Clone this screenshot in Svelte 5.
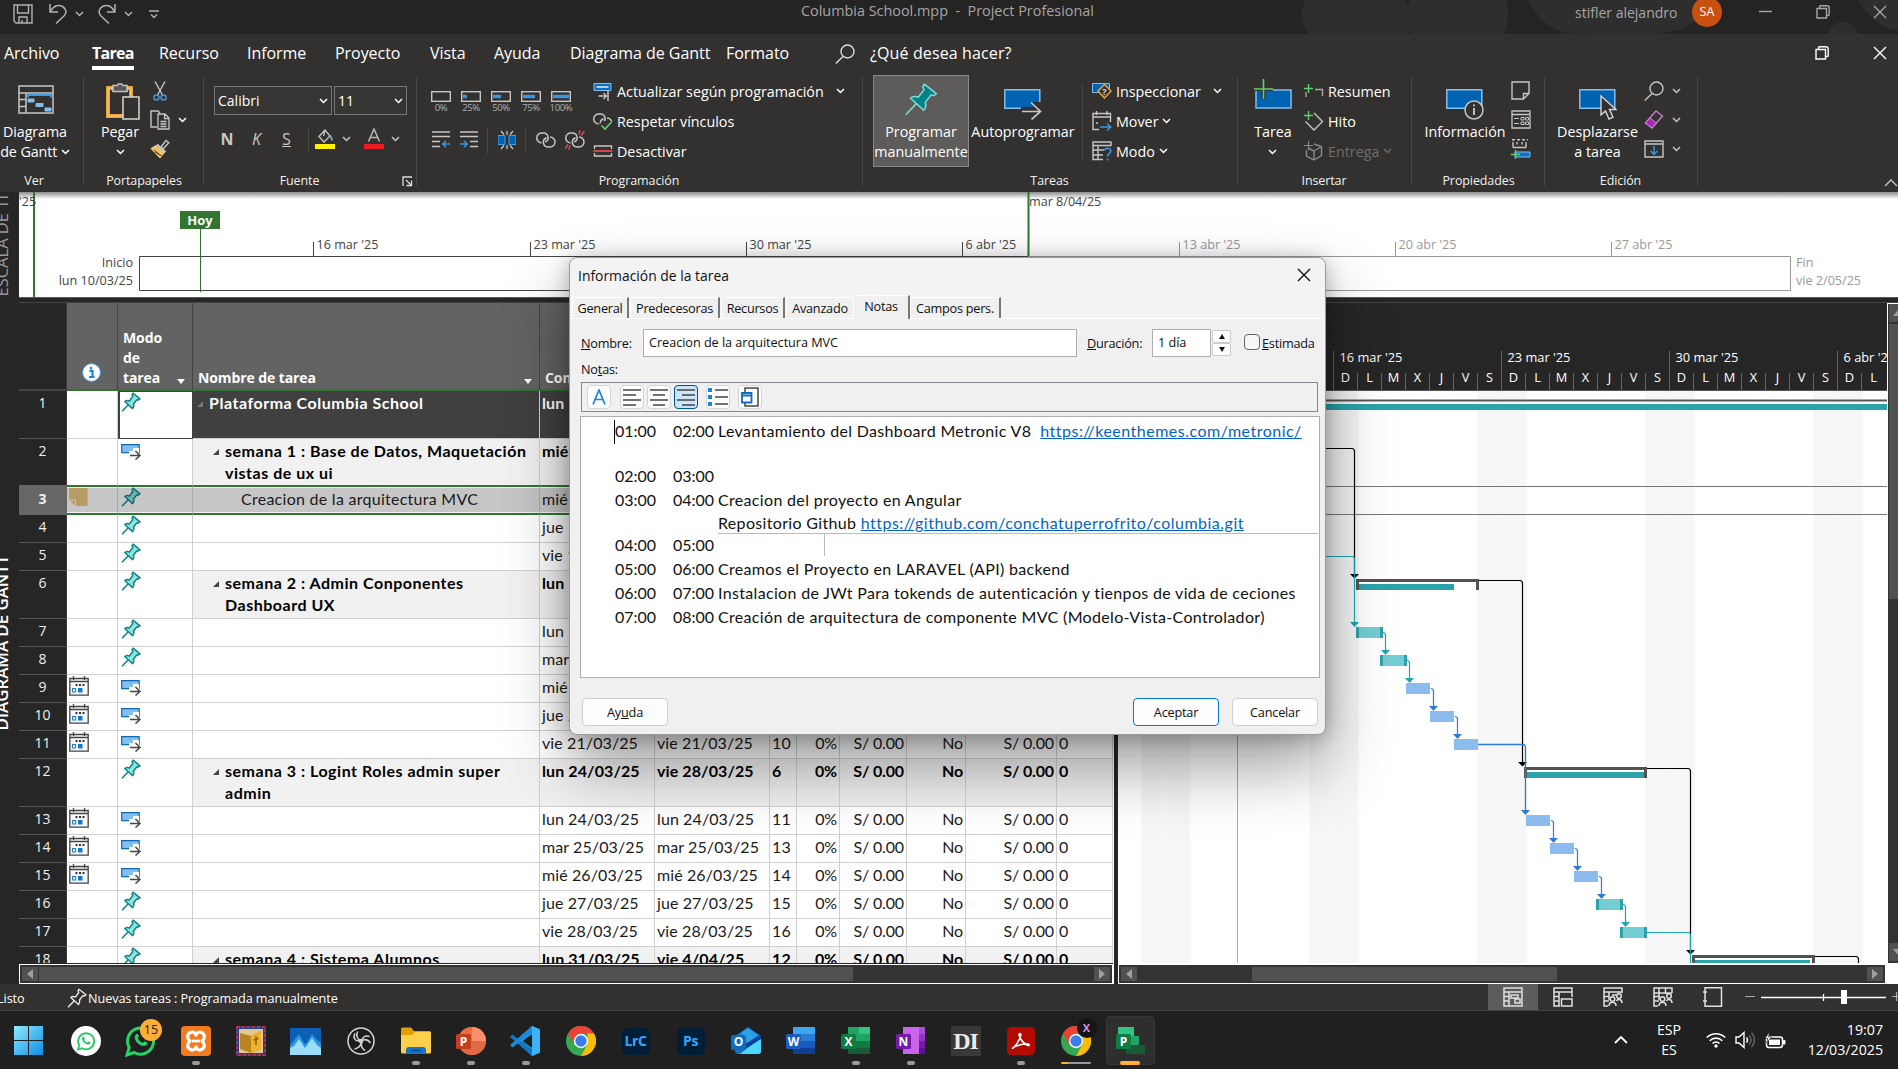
<script>
  const tabs = ['Archivo', 'Tarea', 'Recurso', 'Informe', 'Proyecto', 'Vista', 'Ayuda', 'Diagrama de Gantt', 'Formato'];
  const percents = [0, 25, 50, 75, 100];

  const ticks = [
    { x: 313.5, t: "16 mar '25" },
    { x: 530.5, t: "23 mar '25" },
    { x: 746.5, t: "30 mar '25" },
    { x: 962.5, t: "6 abr '25" },
    { x: 1179.5, t: "13 abr '25", off: true },
    { x: 1395.5, t: "20 abr '25", off: true },
    { x: 1611.5, t: "27 abr '25", off: true }
  ];

  const rows = [
    { n: 1, mode: 'pin', name: 'Plataforma Columbia School', lvl: 1, tall: true, s: 'lun 10/03/25', e: 'vie 2/05/25', p: '' },
    { n: 2, mode: 'auto', name: 'semana 1 : Base de Datos, Maquetación vistas de ux ui', lvl: 2, tall: true, s: 'mié 12/03/25', e: 'vie 14/03/25', p: '' },
    { n: 3, mode: 'pin', name: 'Creacion de la arquitectura MVC', lvl: 3, note: true, sel: true, s: 'mié 12/03/25', e: 'mié 12/03/25', p: '' },
    { n: 4, mode: 'pin', s: 'jue 13/03/25', e: 'jue 13/03/25', p: '3' },
    { n: 5, mode: 'pin', s: 'vie 14/03/25', e: 'vie 14/03/25', p: '4' },
    { n: 6, mode: 'pin', name: 'semana 2 : Admin Conponentes Dashboard UX', lvl: 2, tall: true, s: 'lun 17/03/25', e: 'vie 21/03/25', p: '2' },
    { n: 7, mode: 'pin', s: 'lun 17/03/25', e: 'lun 17/03/25', p: '5' },
    { n: 8, mode: 'pin', s: 'mar 18/03/25', e: 'mar 18/03/25', p: '7' },
    { n: 9, mode: 'auto', cal: true, s: 'mié 19/03/25', e: 'mié 19/03/25', p: '8' },
    { n: 10, mode: 'auto', cal: true, s: 'jue 20/03/25', e: 'jue 20/03/25', p: '9' },
    { n: 11, mode: 'auto', cal: true, s: 'vie 21/03/25', e: 'vie 21/03/25', p: '10' },
    { n: 12, mode: 'pin', name: 'semana 3 : Logint Roles admin super admin', lvl: 2, tall: true, s: 'lun 24/03/25', e: 'vie 28/03/25', p: '6' },
    { n: 13, mode: 'auto', cal: true, s: 'lun 24/03/25', e: 'lun 24/03/25', p: '11' },
    { n: 14, mode: 'auto', cal: true, s: 'mar 25/03/25', e: 'mar 25/03/25', p: '13' },
    { n: 15, mode: 'auto', cal: true, s: 'mié 26/03/25', e: 'mié 26/03/25', p: '14' },
    { n: 16, mode: 'pin', s: 'jue 27/03/25', e: 'jue 27/03/25', p: '15' },
    { n: 17, mode: 'pin', s: 'vie 28/03/25', e: 'vie 28/03/25', p: '16' },
    { n: 18, mode: 'pin', name: 'semana 4 : Sistema Alumnos', lvl: 2, tall: true, s: 'lun 31/03/25', e: 'vie 4/04/25', p: '12' }
  ];

  const weeks = [
    { x: 1165.5, t: "9 mar '25" },
    { x: 1333.5, t: "16 mar '25" },
    { x: 1501.5, t: "23 mar '25" },
    { x: 1669.5, t: "30 mar '25" },
    { x: 1837.5, t: "6 abr '25" }
  ];
  const dayNames = ['D', 'L', 'M', 'X', 'J', 'V', 'S'];
  const days = Array.from({ length: 30 }, (_, i) => ({ x: 1165.5 + i * 24, t: dayNames[i % 7] }));

  const bars = [
    { x: 1356, y: 627, teal: true, ax: 1385.5 },
    { x: 1380, y: 655, teal: true, ax: 1409.5 },
    { x: 1406, y: 683, ax: 1433.5 },
    { x: 1430, y: 711, ax: 1457.5 },
    { x: 1454, y: 739 },
    { x: 1526, y: 815, ax: 1553.5 },
    { x: 1550, y: 843, ax: 1577.5 },
    { x: 1574, y: 871, ax: 1601.5 },
    { x: 1596, y: 899, teal: true, ax: 1625.5 },
    { x: 1620, y: 927, teal: true }
  ];
  const summaries = [
    { x: 1356, y: 579, done: 95 },
    { x: 1524, y: 767, done: 120 },
    { x: 1692, y: 955, done: 118 }
  ];

  const notes = [
    { a: '01:00', b: '02:00', t: 'Levantamiento del Dashboard Metronic V8', link: 'https://keenthemes.com/metronic/', cls: 'two' },
    { a: '02:00', b: '03:00', t: '' },
    { a: '03:00', b: '04:00', t: 'Creacion del proyecto en Angular', t2: 'Repositorio Github', link2: 'https://github.com/conchatuperrofrito/columbia.git', cls: 'two' },
    { a: '04:00', b: '05:00', t: '' },
    { a: '05:00', b: '06:00', t: 'Creamos el Proyecto en LARAVEL (API) backend' },
    { a: '06:00', b: '07:00', t: 'Instalacion de JWt Para tokends de autenticación y tienpos de vida de ceciones' },
    { a: '07:00', b: '08:00', t: 'Creación de arquitectura de componente MVC (Modelo-Vista-Controlador)' }
  ];

  const apps = [
    { i: 'win' }, { i: 'waWhite' }, { i: 'wa', badge: '15' }, { i: 'xampp', run: true }, { i: 'bible' }, { i: 'mount' },
    { i: 'obs' }, { i: 'folder', run: true }, { i: 'ppt', run: true }, { i: 'code', run: true }, { i: 'chrome' },
    { i: 'lrc' }, { i: 'ps' }, { i: 'outlook' }, { i: 'word' }, { i: 'excel', run: true }, { i: 'onenote', run: true },
    { i: 'di' }, { i: 'acrobat', run: true }, { i: 'chromeX', multi: true }, { i: 'project', active: true }
  ];
</script>

{#snippet chev(cls = '')}
  <svg class="chev {cls}" width="9" height="6" viewBox="0 0 9 6"><path d="M1 1l3.5 3.5L8 1" fill="none" stroke="currentColor" stroke-width="1.5" /></svg>
{/snippet}

{#snippet office(letter, kind)}
  <svg class="app" width="30" height="30" viewBox="0 0 30 30">
    {#if kind === 'word'}
      <path d="M7 1h22v7H7z" fill="#41a5ee" /><path d="M7 8h22v7H7z" fill="#2b7cd3" /><path d="M7 15h22v7H7z" fill="#185abd" /><path d="M7 22h22v6H7z" fill="#103f91" />
      <rect x="0" y="8" width="15" height="15" rx="1.5" fill="#1b5cbe" />
    {:else if kind === 'excel'}
      <path d="M7 1h11v7H7zM7 8h11v7H7z" fill="#21a366" /><path d="M18 1h11v7H18z" fill="#33c481" /><path d="M18 8h11v7H18z" fill="#21a366" /><path d="M7 15h22v7H7z" fill="#107c41" /><path d="M7 22h22v6H7z" fill="#185c37" />
      <rect x="0" y="8" width="15" height="15" rx="1.5" fill="#107c41" />
    {:else if kind === 'onenote'}
      <path d="M7 1h16v27H7z" fill="#ca64ea" /><path d="M23 1h6v7h-6z" fill="#ae4bd5" /><path d="M23 8h6v7h-6z" fill="#9332bf" /><path d="M23 15h6v7h-6z" fill="#7719aa" /><path d="M23 22h6v6h-6z" fill="#5c1399" />
      <rect x="0" y="8" width="15" height="15" rx="1.5" fill="#7719aa" />
    {:else if kind === 'ppt'}
      <circle cx="16" cy="15" r="14" fill="#d35230" /><path d="M16 1a14 14 0 0 1 14 14H16z" fill="#ff8f6b" /><path d="M2 15h28a14 14 0 0 1-28 0z" fill="#e06a47" /><path d="M16 1v14H2A14 14 0 0 1 16 1z" fill="#ed6c47" />
      <rect x="0" y="8" width="15" height="15" rx="1.5" fill="#c43e1c" />
    {:else if kind === 'outlook'}
      <path d="M4 10L17 1l13 9v15a3 3 0 0 1-3 3H7a3 3 0 0 1-3-3z" fill="#1172c8" /><path d="M10 7l7-5 10 7-12 9z" fill="#2ea0e8" /><path d="M30 11v14a3 3 0 0 1-3 3H9z" fill="#4fd8ff" /><path d="M14 18l16-9v4L16 22z" fill="#0a3f9a" />
      <rect x="0" y="9" width="15" height="15" rx="1.5" fill="#0f6cbd" />
    {:else}
      <path d="M2 1h16v9H2z" fill="#33c481" /><path d="M8 10h15v9H8z" fill="#21a366" /><path d="M10 19h19v9H10z" fill="#185c37" />
      <rect x="0" y="8" width="15" height="15" rx="1.5" fill="#107c41" />
    {/if}
    <text x="7.5" y="20" text-anchor="middle" class="officeletter">{letter}</text>
  </svg>
{/snippet}

{#snippet chromeIcon()}
  <svg class="app" width="30" height="30" viewBox="0 0 30 30">
    <circle cx="15" cy="15" r="15" fill="#34a853" />
    <path d="M2 7.5A15 15 0 0 1 28 7.5H15L8.5 18.5z" fill="#ea4335" />
    <path d="M28 7.5A15 15 0 0 1 15 30l6.5-11.5L21.5 7.5z" fill="#fbbc05" />
    <circle cx="15" cy="15" r="7.2" fill="#fff" /><circle cx="15" cy="15" r="5.7" fill="#3b7ded" />
  </svg>
{/snippet}

{#snippet appIcon(n)}
  {#if n === 'win'}
    <svg class="app" width="30" height="30" viewBox="0 0 30 30"><defs><linearGradient id="wg" x1="0" y1="0" x2="1" y2="1"><stop offset="0" stop-color="#8feaff" /><stop offset="1" stop-color="#0c8ee4" /></linearGradient></defs><path d="M0 0h14v14H0zM15 0h14v14H15zM0 15h14v14H0zM15 15h14v14H15z" fill="url(#wg)" /></svg>
  {:else if n === 'waWhite'}
    <svg class="app" width="30" height="30" viewBox="0 0 30 30"><circle cx="15" cy="15" r="15" fill="#fff" /><path d="M7 23.5l1.2-4.3a8 8 0 1 1 3 3z" fill="none" stroke="#25c560" stroke-width="1.8" /><path d="M11.5 11.5c1-1.5 1.7-1 2.2.7.3.8-.8 1-.5 1.7.8 1.5 1.7 2.2 2.9 2.7.7.2 1-1.2 1.7-1 1.5.7 1.800.8 1.5 1.5-.8 2-3.5 1.7-5.5.2-2-1.5-3.5-3.800-2.300-5.800z" fill="#25c560" /></svg>
  {:else if n === 'wa'}
    <svg class="app" width="32" height="32" viewBox="0 0 32 32"><path d="M2 30l2.2-7.5a13 13 0 1 1 5 5z" fill="none" stroke="#25d366" stroke-width="3" /><path d="M10.5 10c1.2-2 2.5-1.5 3.3 1 .3 1-1.2 1.5-.8 2.4 1.2 2.3 2.6 3.5 4.5 4.3 1 .3 1.5-1.7 2.6-1.3 2.3 1 2.8 1.2 2.3 2.3-1.2 3-5.5 2.8-8.500.5-3.200-2.400-5.300-6.200-3.400-9.200z" fill="#25d366" /></svg>
  {:else if n === 'xampp'}
    <svg class="app" width="30" height="30" viewBox="0 0 30 30"><rect width="30" height="30" rx="4" fill="#f47a20" /><path d="M9.500 6.500c3.500-1.500 4.500.5 5.500 2.500 1-2 2-4 5.500-2.500 4 1.700 3.500 6 .5 8.500 3 2.500 3.500 6.800-.5 8.500-3.500 1.500-4.500-.5-5.500-2.500-1 2-2 4-5.500 2.500-4-1.700-3.500-6-.5-8.500-3-2.500-3.500-6.800.5-8.500z" fill="none" stroke="#fff" stroke-width="3.200" stroke-linejoin="round" /><path d="M11 15h8" stroke="#fff" stroke-width="2.800" /></svg>
  {:else if n === 'bible'}
    <svg class="app" width="30" height="30" viewBox="0 0 30 30"><rect width="30" height="30" fill="#22408c" /><rect x="1" y="1" width="28" height="28" fill="none" stroke="#c22b3a" stroke-width="2" stroke-dasharray="3 2" /><rect x="3" y="3" width="24" height="24" fill="#e0c890" /><path d="M4 7l11 3 10-5v18l-10 4-11-4z" fill="#b98420" /><path d="M15 10l10-5v18l-10 4z" fill="#edb32e" /><path d="M20 10v9M17.5 14l5-1.5" stroke="#8c5a10" stroke-width="1.4" /></svg>
  {:else if n === 'mount'}
    <svg class="app" width="31" height="27" viewBox="0 0 31 27"><rect width="31" height="27" rx="1" fill="#0c5fb4" /><path d="M0 18l5-7 4-5 5 9 2 1 6-10 4 5 5 4v12H0z" fill="#2b95de" /><path d="M0 20l4-2 5-7 6 9 7-10 5 7 4 3v7H0z" fill="#9adcfa" /></svg>
  {:else if n === 'obs'}
    <svg class="app" width="28" height="28" viewBox="0 0 28 28"><circle cx="14" cy="14" r="13" fill="#1c1b1e" stroke="#d5d5d5" stroke-width="1.500" /><path d="M14 14c-4-2-5-5.500-3.500-9.500M14 14c4-2.500 7-1.500 9.500 2M14 14c.3 4.500-2 7-6.500 8M8 6.500c-2.500 4 0 8 4 7.500M22.500 9.500c-4-1.500-7.500.5-7.500 4.500M18 23.500c-3.500-2-4.500-5-3-9" fill="none" stroke="#cfcfcf" stroke-width="1.500" /><circle cx="14" cy="14" r="2.300" fill="#cfcfcf" /></svg>
  {:else if n === 'folder'}
    <svg class="app" width="30" height="28" viewBox="0 0 30 28"><path d="M0 2a1.500 1.500 0 0 1 1.500-1.500H10L13 4h15.500A1.500 1.500 0 0 1 30 5.500V12H0z" fill="#e0a100" /><path d="M0 8h11l3-3h14.500A1.500 1.500 0 0 1 30 6.500V25a1.500 1.500 0 0 1-1.500 1.500h-27A1.500 1.500 0 0 1 0 25z" fill="#fcd04a" /><path d="M5 27v-4a3 3 0 0 1 3-3h14a3 3 0 0 1 3 3v4z" fill="#1673c8" /><path d="M10 23.500h10" stroke="#0a4a8c" stroke-width="1.500" /></svg>
  {:else if n === 'code'}
    <svg class="app" width="31" height="30" viewBox="0 0 31 30"><path d="M22 0l8 3.500v23L22 30 6 15z" fill="#2aa2ea" /><path d="M22 8v14l-9.500-7z" fill="#202020" /><path d="M2.500 8.500L22 23v7L0 11z" fill="#1177c2" /><path d="M2.500 21.500L22 7V0L0 19z" fill="#1b8ad8" /><path d="M22 0l8 3.500v23L22 30z" fill="#3bb3f5" /></svg>
  {:else if n === 'chrome'}
    {@render chromeIcon()}
  {:else if n === 'chromeX'}
    <span class="stack">{@render chromeIcon()}<span class="xbadge">X</span></span>
  {:else if n === 'lrc'}
    <span class="adobe">LrC</span>
  {:else if n === 'ps'}
    <span class="adobe">Ps</span>
  {:else if n === 'outlook'}
    {@render office('O', 'outlook')}
  {:else if n === 'word'}
    {@render office('W', 'word')}
  {:else if n === 'excel'}
    {@render office('X', 'excel')}
  {:else if n === 'onenote'}
    {@render office('N', 'onenote')}
  {:else if n === 'ppt'}
    {@render office('P', 'ppt')}
  {:else if n === 'project'}
    {@render office('P', 'project')}
  {:else if n === 'di'}
    <span class="di">DI</span>
  {:else if n === 'acrobat'}
    <svg class="app" width="28" height="28" viewBox="0 0 28 28"><rect width="28" height="28" rx="4.500" fill="#b30b00" /><path d="M6 21c2.500-2 7-8 7.800-13 .2-2-2-2-1.700 0 .8 4.500 5 9 8.900 10.500 2 .5 1.500-2-1-1.800-4 .2-9 1.500-12.500 3.200-2 1.200-2.500 1.800-1.500 1.100z" fill="none" stroke="#fff" stroke-width="1.600" stroke-linejoin="round" /></svg>
  {/if}
{/snippet}

{#snippet pin(w = 20, fill = '#8ee5e0', stroke = '#128289', sw = 1.5)}
  <svg width={w} height={w} viewBox="0 0 20 20"><path d="M1 19.300l6-6.300M12 1.200l7 5.600-1.500 1.200-1.600-.3-3.400 4.300c.6 1.700.2 3.300-.9 4.600L3.800 9.500c1.300-1.100 3-1.300 4.600-.5L11.800 4.500 11 2.800z" fill={fill} stroke={stroke} stroke-width={sw} stroke-linejoin="round" /></svg>
{/snippet}

{#snippet restore()}
  <svg width="14" height="14" viewBox="0 0 14 14"><path d="M1 3.500h9.500v9.500H1zM3.500 3V1.700C3.500 1 4 .8 4.500.8H11c1.500 0 2.200.8 2.200 2.200v6.500c0 .7-.4 1-1 1H11" fill="none" stroke="currentColor" stroke-width="1.400" /></svg>
{/snippet}
{#snippet cross()}
  <svg width="14" height="14" viewBox="0 0 14 14"><path d="M1 1l12 12M13 1L1 13" fill="none" stroke="currentColor" stroke-width="1.400" /></svg>
{/snippet}

{#snippet icon(n)}
  {#if n === 'gantt'}
    <svg width="36" height="29" viewBox="0 0 36 29"><path d="M1 1h34v27H1zM1 8h34M8 8v20M1 14.500h7M1 21.500h7" fill="none" stroke="#c8c6c4" stroke-width="1.500" /><path d="M10 12.500v-2.500h23v2.500" fill="none" stroke="#3a9ae8" stroke-width="2" /><path d="M10 14h6v3h-6zM18 18.500h7v3h-7zM27 23h6v3h-6z" fill="#83beec" stroke="#83beec" /></svg>
  {:else if n === 'paste'}
    <svg width="34" height="39" viewBox="0 0 34 39"><path d="M2 7h23v28H2z" fill="none" stroke="#e8a33d" stroke-width="4" /><path d="M2 7h23v28H2z" fill="none" stroke="#f3d38b" stroke-width="1" /><path d="M7 4.500h4a3.500 3.500 0 0 1 6 0h4v6H7z" fill="#555" stroke="#c8c6c4" stroke-width="1.500" /><path d="M17 16h16v22H17z" fill="#32312f" stroke="#d8d6d4" stroke-width="1.500" /></svg>
  {:else if n === 'cut'}
    <svg width="14" height="20" viewBox="0 0 14 20"><path d="M2 .5L9.500 14M12 .5L4.500 14" stroke="#c8c6c4" stroke-width="1.400" fill="none" /><circle cx="3.500" cy="16.500" r="2.500" fill="none" stroke="#3a96dd" stroke-width="1.600" /><circle cx="10.500" cy="16.500" r="2.500" fill="none" stroke="#3a96dd" stroke-width="1.600" /></svg>
  {:else if n === 'copy'}
    <svg width="20" height="20" viewBox="0 0 20 20"><path d="M7 17H1V1h7l2 2" fill="none" stroke="#c8c6c4" stroke-width="1.400" /><path d="M8 4h7l4 4v11H8zM14.500 4v4.500H19M10.500 11.500h6M10.500 14h6M10.500 16.500h6" fill="none" stroke="#c8c6c4" stroke-width="1.300" /></svg>
  {:else if n === 'brush'}
    <svg width="20" height="20" viewBox="0 0 20 20"><path d="M11 8l5-6.500 2.800 2.300L13 10z" fill="none" stroke="#c8c6c4" stroke-width="1.400" /><path d="M1 9.500l5-3 8.500 7L10 19z" fill="#f0c06a" stroke="#f3d38b" /><path d="M5 13l7 4M4 11l6 5" stroke="#5a3d10" stroke-width="1" /><path d="M7 5.500l8.500 7.500" stroke="#c8c6c4" stroke-width="2" /></svg>
  {:else if n === 'fill'}
    <svg width="20" height="22" viewBox="0 0 20 22"><path d="M4 8.500L10 2l5 6-6 6zM10 2L8.500 8" fill="none" stroke="#c8c6c4" stroke-width="1.300" /><path d="M15 7c2 1 3 3.500 2.500 6-1 0-1.500-1-2-3z" fill="#6db3e8" /><path d="M0 16h20v5H0z" fill="#fff200" /></svg>
  {:else if n === 'fontcolor'}
    <svg width="20" height="22" viewBox="0 0 20 22"><path d="M4.500 13.500L10 1l5.500 12.500M6.500 9.500h7" fill="none" stroke="#b8b6b4" stroke-width="1.500" /><path d="M0 16h20v5H0z" fill="#ed1c24" /></svg>
  {:else if n === 'outdent' || n === 'indent'}
    <svg width="18" height="18" viewBox="0 0 18 18"><path d="M0 1h18M0 5.500h18" stroke="#c8c6c4" stroke-width="1.400" />{#if n === 'outdent'}<path d="M0 10.500h8M0 15.500h8" stroke="#c8c6c4" stroke-width="1.400" /><path d="M18 13h-7M14 9.800L10.800 13l3.200 3.200" fill="none" stroke="#3a96dd" stroke-width="1.500" />{:else}<path d="M10 10.500h8M10 15.500h8" stroke="#c8c6c4" stroke-width="1.400" /><path d="M0 13h7M4 9.800L7.200 13 4 16.200" fill="none" stroke="#3a96dd" stroke-width="1.500" />{/if}</svg>
  {:else if n === 'split'}
    <svg width="18" height="20" viewBox="0 0 18 20"><path d="M0 5.500h7v9H0zM11 5.500h7v9h-7z" fill="#0063b1" stroke="#4aa0e0" /><path d="M9 1v4M9 15v4M3 1l3 3.500M15 1l-3 3.500M3 19l3-3.500M15 19l-3-3.500" stroke="#c8c6c4" stroke-width="1.300" /></svg>
  {:else if n === 'link' || n === 'unlink' || n === 'respect'}
    <svg width="20" height="20" viewBox="0 0 20 20"><path d="M5.500 13A5 5 0 0 1 6 3h1.500a4.700 4.700 0 0 1 1.800 9M14 7a5 5 0 0 1 0 10h-2a4.800 4.800 0 0 1-1.500-9.300" fill="none" stroke="#c8c6c4" stroke-width="1.500" />{#if n === 'unlink'}<path d="M14 4.500l1-4.500M16 5.500L19.500 1M5 15.500L4 20M3 14.500L0 19" stroke="#e8494f" stroke-width="1.400" />{/if}{#if n === 'respect'}<path d="M7 13l2-3 11 0v10H7z" fill="#32312f" /><path d="M8.500 14.500l3.500 3.500 7-7.500" fill="none" stroke="#5fcf6e" stroke-width="1.600" />{/if}</svg>
  {:else if n === 'update'}
    <svg width="19" height="19" viewBox="0 0 19 19"><path d="M.5 1.500h17v7H.5z" fill="#0b6fc4" stroke="#83beec" /><path d="M3 5h12" stroke="#e8e8e8" stroke-width="1.500" /><path d="M5 14h8M10 11l3 3-3 3" fill="none" stroke="#c8c6c4" stroke-width="1.300" /><path d="M14.500 9v10" stroke="#c8c6c4" stroke-width="1.500" /></svg>
  {:else if n === 'off'}
    <svg width="19" height="12" viewBox="0 0 19 12"><path d="M1 4V1h17v3M1 8v3h17V8" fill="none" stroke="#c8c6c4" stroke-width="1.400" /><path d="M0 6h19" stroke="#e8494f" stroke-width="1.800" /></svg>
  {:else if n === 'auto'}
    <svg width="38" height="31" viewBox="0 0 38 31"><path d="M.8.800h35v18.500H.8z" fill="#0063b1" stroke="#83beec" stroke-width="1.500" /><path d="M17 18h12v-5h8v10H17z" fill="#32312f" /><path d="M18 22.500h18M27 13.500l9.500 9-9 8" fill="none" stroke="#c8c6c4" stroke-width="1.700" /></svg>
  {:else if n === 'inspect'}
    <svg width="20" height="16" viewBox="0 0 20 16"><path d="M.5.500h17v9H.5z" fill="#0063b1" stroke="#83beec" /><path d="M12.500 1.500l6.500 6.500-6.500 7L6 8z" fill="#32312f" stroke="#e8a33d" stroke-width="1.500" /><text x="12.500" y="11.500" text-anchor="middle" class="qmark">?</text></svg>
  {:else if n === 'move'}
    <svg width="20" height="20" viewBox="0 0 20 20"><path d="M7 18.500H1V2.500h17.500V11M1 6h17.500M4.500 0v4M15 0v4M4 12h2" fill="none" stroke="#c8c6c4" stroke-width="1.400" /><path d="M8 16h11M15 12.500l3.800 3.500-3.800 3.500" fill="none" stroke="#3a96dd" stroke-width="1.500" /></svg>
  {:else if n === 'mode'}
    <svg width="20" height="20" viewBox="0 0 20 20"><path d="M1 1h18v3.500H1zM1 4.500v14h10M1 9h11M1 14h10M6 4.500v14" fill="none" stroke="#c8c6c4" stroke-width="1.400" /><path d="M12.500 9.500c.3-2.800 6.500-3 6.300.5-.2 2.500-3.300 2.800-3.300 5.500M15.500 17.500v2" fill="none" stroke="#3a96dd" stroke-width="1.700" /></svg>
  {:else if n === 'newtask'}
    <svg width="38" height="30" viewBox="0 0 38 30"><path d="M2 11h35v18H2z" fill="#0063b1" stroke="#83beec" stroke-width="1.500" /><path d="M9.500 0v20M0 10h19" stroke="#32312f" stroke-width="4" /><path d="M9.500 0v20M0 10h19" stroke="#5fd06e" stroke-width="1.600" /></svg>
  {:else if n === 'summary'}
    <svg width="20" height="14" viewBox="0 0 20 14"><path d="M4.500 0v9M0 4.500h9" stroke="#5fcf6e" stroke-width="1.400" /><path d="M11 5.500h7.500V12M2 8v5" fill="none" stroke="#a8a6a4" stroke-width="1.400" /></svg>
  {:else if n === 'milestone'}
    <svg width="20" height="20" viewBox="0 0 20 20"><path d="M10 2l8.500 8.500L10 19l-8.500-8.500" fill="none" stroke="#c8c6c4" stroke-width="1.400" /><path d="M4.500 0v9M0 4.500h9" stroke="#5fcf6e" stroke-width="1.400" /></svg>
  {:else if n === 'deliver'}
    <svg width="20" height="20" viewBox="0 0 20 20"><path d="M10 3l7.500 2.500v9L10 19l-7.500-4V9M10 10l7.500-4.500M10 10v9M10 10L4 7" fill="none" stroke="#8a8886" stroke-width="1.400" /><path d="M4.500 0v9M0 4.500h9" stroke="#8a8886" stroke-width="1.200" /></svg>
  {:else if n === 'info'}
    <svg width="38" height="31" viewBox="0 0 38 31"><path d="M.8.800h35v18.500H.8z" fill="#0063b1" stroke="#83beec" stroke-width="1.500" /><circle cx="28" cy="21" r="9" fill="#32312f" stroke="#c8c6c4" stroke-width="1.500" /><path d="M28 19v7M28 15.500v1.800" stroke="#e0e0e0" stroke-width="1.600" /></svg>
  {:else if n === 'notes'}
    <svg width="19" height="19" viewBox="0 0 19 19"><path d="M1 1h17v11.500L12.500 18H1zM18 12.500h-5.500V18" fill="none" stroke="#c8c6c4" stroke-width="1.400" /></svg>
  {:else if n === 'details'}
    <svg width="20" height="19" viewBox="0 0 20 19"><path d="M1 1h18v17H1zM1 4.500h18" fill="none" stroke="#c8c6c4" stroke-width="1.300" /><path d="M3 8.500h5M3 13.500h5M10 7.500h3v2.500h-3zM14.500 7.500h3v2.500h-3zM10 12h3v2.500h-3zM14.500 12h3v2.500h-3z" fill="none" stroke="#c8c6c4" stroke-width="1" /></svg>
  {:else if n === 'timeline'}
    <svg width="20" height="20" viewBox="0 0 20 20"><path d="M1 .8h3M6 .8h3M11 .8h3M16 .8h1M2 8.500h13M2 3v5.500M15 3v5.500M6 3v2.500M11 3v2.500" stroke="#c8c6c4" stroke-width="1.400" /><path d="M4 13h15v5H4z" fill="#0b6fc4" stroke="#83beec" /><path d="M4.500 11v9M0 15.500h9" stroke="#5fcf6e" stroke-width="1.500" /></svg>
  {:else if n === 'scrollto'}
    <svg width="38" height="31" viewBox="0 0 38 31"><path d="M.8.800h35v18.500H.8z" fill="#0063b1" stroke="#83beec" stroke-width="1.500" /><path d="M22 7v19l4.500-4 3.500 8 4-1.800-3.500-7.700h6.500z" fill="#32312f" stroke="#d8d6d4" stroke-width="1.400" /></svg>
  {:else if n === 'find'}
    <svg width="20" height="20" viewBox="0 0 20 20"><circle cx="12.500" cy="7.500" r="6.500" fill="none" stroke="currentColor" stroke-width="1.400" /><path d="M8 12.500L.8 19.500" stroke="currentColor" stroke-width="1.400" /></svg>
  {:else if n === 'clear'}
    <svg width="20" height="19" viewBox="0 0 20 19"><path d="M12 1l6.500 5L8 18l-6.500-5z" fill="none" stroke="#c87dd0" stroke-width="1.400" /><path d="M6 8l6.500 5L8 18l-6.500-5z" fill="#a52bb0" stroke="#d48ddc" /></svg>
  {:else if n === 'filldown'}
    <svg width="20" height="18" viewBox="0 0 20 18"><path d="M1 1h18v16H1zM1 4h18" fill="none" stroke="#c8c6c4" stroke-width="1.400" /><path d="M10 6v8.500M6.500 11l3.500 3.500 3.500-3.500" fill="none" stroke="#3a96dd" stroke-width="1.500" /></svg>
  {:else if n === 'autorow'}
    <svg width="20" height="16" viewBox="0 0 20 16"><path d="M.7.700h17.500v8H.7z" fill="#83beec" stroke="#0f68b4" stroke-width="1.200" /><path d="M8 7h4V4h6v5l2 2v4H9z" fill="#fff" /><path d="M9 11.500h9.500M14.500 7l4.500 4.500-4.500 4" fill="none" stroke="#444" stroke-width="1.500" /></svg>
  {:else if n === 'calendar'}
    <svg width="20" height="20" viewBox="0 0 20 20"><path d="M.8 2.500h18.400v16.700H.8zM.8 5.500h18.400M4.500 0v4M15.500 0v4" fill="#f8f8f8" stroke="#444" stroke-width="1.300" /><path d="M6.500 8h2v2h-2zM10 8h2v2h-2zM13.500 8h2v2h-2z" fill="#333" /><path d="M3.500 12.500h3v3.500h-3z" fill="none" stroke="#1a86d0" stroke-width="1.200" /><path d="M9 12h4.500v4.500H9z" fill="#1a78c8" /></svg>
  {:else if n === 'note'}
    <svg width="19" height="18" viewBox="0 0 19 18"><path d="M0 0h18.500v18H7v-6.500H0z" fill="#b89b66" /><path d="M1 12.500h5V18z" fill="#b89b66" /></svg>
  {/if}
{/snippet}

<div class="window">
  <header class="titlebar">
    <svg class="clouds" width="600" height="34" viewBox="0 0 600 34"><g fill="#2e2e2e"><circle cx="38" cy="14" r="34" /><circle cx="84" cy="20" r="30" /><circle cx="160" cy="14" r="50" /><path d="M230 0h190c10 10-4 24-25 22-22 20-90 10-120 12-30-5-36-20-45-34z" /><circle cx="545" cy="38" r="16" /><path d="M560 0h40v30c-20-2-30-15-40-30z" /></g></svg>
    <div class="quick">
      <svg width="20" height="20" viewBox="0 0 20 20"><path d="M1 1h18v18H3l-2-2zM4.500 1v8h11V1M6 19v-6h8v6M9 19v-3" fill="none" stroke="currentColor" stroke-width="1.400" /></svg>
      <svg width="19" height="20" viewBox="0 0 19 20"><path d="M1 0v8h8M1.500 7.500C5 1 10 .5 13.500 2.500c4 2.500 4.500 6.500 1.500 9.500l-8 7.500" fill="none" stroke="currentColor" stroke-width="1.500" /></svg>
      {@render chev()}
      <svg width="19" height="20" viewBox="0 0 19 20"><path d="M18 0v8h-8M17.500 7.500C14 1 9 .5 5.500 2.500c-4 2.500-4.500 6.500-1.500 9.500l8 7.500" fill="none" stroke="currentColor" stroke-width="1.500" /></svg>
      {@render chev()}
      <svg width="10" height="9" viewBox="0 0 10 9"><path d="M0 1h10M2 4.500l3 3 3-3" fill="none" stroke="currentColor" stroke-width="1.400" /></svg>
    </div>
    <div class="doc">Columbia School.mpp&nbsp; -&nbsp; Project Profesional</div>
    <div class="user">stifler alejandro</div>
    <div class="avatar">SA</div>
    <div class="wbtns"><svg width="14" height="14" viewBox="0 0 14 14"><path d="M0 6.500h13" stroke="currentColor" stroke-width="1.400" /></svg>{@render restore()}{@render cross()}</div>
  </header>

  <nav class="tabs">
    {#each tabs as t}<span><b class:on={t === 'Tarea'}>{t}</b></span>{/each}
    <span class="search">{@render icon('find')}</span>
    <span class="ask"><b>¿Qué desea hacer?</b></span>
    <span class="docbtns">{@render restore()}{@render cross()}</span>
  </nav>

  <section class="ribbon">
    <div class="group g1">
      <div class="body"><div class="big">{@render icon('gantt')}<span>Diagrama<br />de Gantt {@render chev()}</span></div></div>
      <div class="label">Ver</div>
    </div>
    <div class="group g2">
      <div class="body">
        <div class="big paste">{@render icon('paste')}<span>Pegar<br />{@render chev()}</span></div>
        <div class="smallcol"><div>{@render icon('cut')}</div><div>{@render icon('copy')}{@render chev()}</div><div>{@render icon('brush')}</div></div>
      </div>
      <div class="label">Portapapeles</div>
    </div>
    <div class="group g3">
      <div class="body fonts">
        <div class="combos"><div class="combo">Calibri{@render chev()}</div><div class="combo">11{@render chev()}</div></div>
        <div class="fmt"><b>N</b><i>K</i><u>S</u><span class="vsep"></span><span class="pair">{@render icon('fill')}{@render chev()}</span><span class="pair">{@render icon('fontcolor')}{@render chev()}</span></div>
      </div>
      <div class="label">Fuente<svg class="launch" width="11" height="11" viewBox="0 0 11 11"><path d="M1 10V1h9M4 4l5 5M9.500 4.500v5h-5" fill="none" stroke="#ddd" stroke-width="1.300" /></svg></div>
    </div>
    <div class="group g4">
      <div class="body">
        <div class="sched">
          <div class="pcts">{#each percents as p}<div><svg width="20" height="11" viewBox="0 0 20 11"><rect x=".7" y=".7" width="18.600" height="9.600" fill="none" stroke="#c8c6c4" stroke-width="1.400" />{#if p}<path d="M2 5.500h{16 * p / 100}" stroke="#3a96dd" stroke-width="3.500" />{/if}</svg><small>{p}%</small></div>{/each}</div>
          <div class="ind">{@render icon('outdent')}{@render icon('indent')}<span class="vsep"></span>{@render icon('split')}<span class="vsep"></span>{@render icon('link')}{@render icon('unlink')}</div>
        </div>
        <div class="lines">
          <div>{@render icon('update')}<span>Actualizar según programación</span>{@render chev('far')}</div>
          <div>{@render icon('respect')}<span>Respetar vínculos</span></div>
          <div>{@render icon('off')}<span>Desactivar</span></div>
        </div>
      </div>
      <div class="label">Programación</div>
    </div>
    <div class="group g5">
      <div class="body">
        <div class="big sel">{@render pin(34, '#038387', '#7fd8d4', 0.9)}<span>Programar<br />manualmente</span></div>
        <div class="big autop">{@render icon('auto')}<span>Autoprogramar</span></div>
        <span class="vsep tallsep"></span>
        <div class="lines">
          <div>{@render icon('inspect')}<span>Inspeccionar</span>{@render chev('far')}</div>
          <div>{@render icon('move')}<span>Mover</span>{@render chev()}</div>
          <div>{@render icon('mode')}<span>Modo</span>{@render chev()}</div>
        </div>
      </div>
      <div class="label">Tareas</div>
    </div>
    <div class="group g6">
      <div class="body">
        <div class="big ntask">{@render icon('newtask')}<span>Tarea<br />{@render chev()}</span></div>
        <div class="lines">
          <div>{@render icon('summary')}<span>Resumen</span></div>
          <div>{@render icon('milestone')}<span>Hito</span></div>
          <div class="dis">{@render icon('deliver')}<span>Entrega</span>{@render chev()}</div>
        </div>
      </div>
      <div class="label">Insertar</div>
    </div>
    <div class="group g7">
      <div class="body">
        <div class="big low">{@render icon('info')}<span>Información</span></div>
        <div class="smallcol"><div>{@render icon('notes')}</div><div>{@render icon('details')}</div><div>{@render icon('timeline')}</div></div>
      </div>
      <div class="label">Propiedades</div>
    </div>
    <div class="group g8">
      <div class="body">
        <div class="big low">{@render icon('scrollto')}<span>Desplazarse<br />a tarea</span></div>
        <div class="smallcol"><div>{@render icon('find')}{@render chev()}</div><div>{@render icon('clear')}{@render chev()}</div><div>{@render icon('filldown')}{@render chev()}</div></div>
      </div>
      <div class="label">Edición</div>
    </div>
    <div class="collapse"><svg width="14" height="8" viewBox="0 0 14 8"><path d="M1 7l6-6 6 6" fill="none" stroke="#c8c6c4" stroke-width="1.400" /></svg></div>
  </section>

  <section class="timeline">
    <div class="side"><span class="escala">ESCALA DE TI</span></div>
    <svg class="tl" width="1879" height="106" viewBox="19 192 1879 106">
      <defs><linearGradient id="sh" x1="0" y1="0" x2="0" y2="1"><stop offset="0" stop-color="#8c8c8c" /><stop offset="1" stop-color="#fff" /></linearGradient></defs>
      <rect x="19" y="192" width="1879" height="106" fill="#fff" />
      <rect x="19" y="192" width="1879" height="7" fill="url(#sh)" />
      <path d="M34 192v106M1028.500 192v106" stroke="#31752f" stroke-width="2" />
      <path d="M19 297.500h1879" stroke="#31752f" stroke-width="1" />
      <text x="19" y="206">'25</text>
      <text x="1029" y="206">mar 8/04/25</text>
      <path d="M1028 256.500H139.500v34H1028" fill="none" stroke="#444" />
      <path d="M1028 256.500h762.500v34H1028" fill="none" stroke="#999" />
      {#each ticks as k}
        <path d="M{k.x} 242v14" stroke={k.off ? '#999' : '#444'} />
        <text x={k.x + 3} y="249" class:off={k.off}>{k.t}</text>
      {/each}
      <path d="M200.500 229v63" stroke="#31752f" />
      <rect x="180" y="211" width="40" height="18" fill="#31752f" />
      <text x="200" y="225" text-anchor="middle" class="hoy">Hoy</text>
      <text x="133" y="267" text-anchor="end">Inicio</text>
      <text x="133" y="285" text-anchor="end">lun 10/03/25</text>
      <text x="1796" y="267" class="off">Fin</text>
      <text x="1796" y="285" class="off">vie 2/05/25</text>
    </svg>
  </section>

  <section class="main">
    <div class="side"><span class="diag">DIAGRAMA DE GANTT</span></div>
    <div class="tablepane">
      <div class="row head">
        <div class="num"></div>
        <div class="infocol"><svg width="19" height="19" viewBox="0 0 19 19"><circle cx="9.500" cy="9.500" r="9" fill="#fff" stroke="#2f9de0" stroke-width="1" /><path d="M7.500 8h3v6M7 14h5.500M9 4v2.500" stroke="#1a86d0" stroke-width="2.200" fill="none" /></svg></div>
        <div class="hm">Modo<br />de<br />tarea<i class="flt"></i></div>
        <div>Nombre de tarea<i class="flt"></i></div>
        <div class="hc">Comienzo</div><div class="hc">Fin</div><div></div><div></div><div></div><div></div><div></div><div></div>
      </div>
      <div class="rows">
        {#each rows as r}
          <div class="row" class:tall={r.tall} class:sum={r.lvl === 2} class:root={r.lvl === 1} class:sel={r.sel}>
            <div class="num">{r.n}</div>
            <div class="ic">{#if r.cal}{@render icon('calendar')}{:else if r.note}{@render icon('note')}{/if}</div>
            <div class="ic mode">{#if r.mode === 'pin'}{@render pin(20, r.sel ? '#6fb3b0' : '#8ee5e0', r.sel ? '#146b70' : '#128289')}{:else}<span class="ar">{@render icon('autorow')}</span>{/if}</div>
            <div class="name l{r.lvl}">{#if r.lvl < 3}<i class="tri"></i>{/if}{r.name ?? ''}</div>
            <div>{r.s}</div><div>{r.e}</div><div>{r.p}</div>
            <div class="r">0%</div><div class="r">S/ 0.00</div><div class="r">No</div><div class="r">S/ 0.00</div><div>0</div>
          </div>
        {/each}
      </div>
      <div class="hscroll left"><i class="btn"><i class="al"></i></i><i class="thumb"></i><i class="track"></i><i class="btn"><i class="arr"></i></i></div>
    </div>
    <div class="split"></div>
    <div class="ganttpane">
      <div class="gcol">
        <svg width="769" height="660" viewBox="1118 303 769 660">
          <rect x="1118" y="303" width="769" height="88" fill="#262626" />
          {#each weeks as w}
            <path d="M{w.x} 351v39" stroke="#666" />
            <text x={w.x + 6} y="362" class="gt">{w.t}</text>
          {/each}
          {#each days as d}
            <path d="M{d.x} 373v17" stroke="#666" />
            <text x={d.x + 12} y="382" text-anchor="middle" class="gt">{d.t}</text>
          {/each}
          <path d="M1118 390.500h769" stroke="#555" />
          <rect x="1118" y="391" width="769" height="572" fill="#fff" />
          {#each weeks as w}
            <rect x={w.x - 24} y="391" width="24" height="572" fill="#f6f6f6" /><rect x={w.x + .5} y="391" width="24.500" height="572" fill="#f6f6f6" />
          {/each}
          <path d="M1118 486.500h769M1118 514.500h769" stroke="#777" />
          <path d="M1237.500 391v572" stroke="#8cc18c" />
          <path d="M1118 400.500h769" stroke="#5a5555" stroke-width="2" />
          <path d="M1118 407h769" stroke="#2ba3ab" stroke-width="6" />
          <g fill="none" stroke="#000" stroke-width="1.200">
            <path d="M1200 448.500h152q2.500 0 2.500 3v124M1479 580.500h41q2.500 0 2.500 3v180M1647 768.500h41q2.500 0 2.500 3v180M1815 956.500h41q2.500 0 2.500 3v6" />
            <path d="M1350 574h9l-4.500 4.500zM1518 762h9l-4.500 4.500zM1686 950h9l-4.500 4.500z" fill="#000" stroke="none" />
          </g>
          {#each summaries as s}
            <path d="M{s.x + 1.5} {s.y + 11}v-9.500h120v9.500" fill="none" stroke="#555253" stroke-width="3" />
            <rect x={s.x + 3} y={s.y + 5} width={s.done - (s.done > 100 ? 3 : 0)} height="6" fill="#2ba3ab" />
          {/each}
          <g fill="none" stroke="#1fa5b0" stroke-width="1.200">
            <path d="M1300 556.500h52q2.500 0 2.500 3v67M1647 932.500h41q2.500 0 2.500 3v28" />
            <path d="M1350 622h9l-4.500 5z" fill="#1fa5b0" stroke="none" />
          </g>
          <path d="M1478 744.500h45q2.500 0 2.500 3v63" fill="none" stroke="#2b7cd3" stroke-width="1.300" />
          <path d="M1521 810h9l-4.500 5z" fill="#2b7cd3" />
          {#each bars as b}
            {#if b.teal}
              <rect x={b.x} y={b.y} width="27" height="11" fill="#2ba3ab" /><rect x={b.x + 3} y={b.y} width="21" height="11" fill="#74cdd3" />
            {:else}
              <rect x={b.x} y={b.y} width="24" height="11" fill="#8cbbee" />
            {/if}
            {#if b.ax}
              <path d="M{b.ax - 2.5} {b.y + 5.5}q2.500 0 2.500 3v15" fill="none" stroke={b.teal ? '#1fa5b0' : '#2b7cd3'} stroke-width="1.200" />
              <path d="M{b.ax - 4.5} {b.y + 23}h9l-4.500 5z" fill={b.teal ? '#1fa5b0' : '#2b7cd3'} />
            {/if}
          {/each}
        </svg>
        <div class="hscroll right"><i class="btn"><i class="al"></i></i><i class="track t1"></i><i class="thumb"></i><i class="track"></i><i class="btn"><i class="arr"></i></i></div>
      </div>
      <div class="vscroll"><i class="btn"><i class="au"></i></i><i class="thumb"></i><i class="track"></i><i class="btn"><i class="ad"></i></i></div>
    </div>
  </section>

  <footer class="status">
    <span class="listo">Listo</span>
    <span class="newt">{@render pin(20, 'none', '#eee', 1.3)}Nuevas tareas : Programada manualmente</span>
    <div class="views">
      <i class="on"><svg width="20" height="20" viewBox="0 0 20 20"><path d="M1 1h18v18H1zM1 5h18M6 5v14M1 9.500h5M1 14h5M8 8h7v3H8zM12 12h5v4h-5z" /></svg></i>
      <i><svg width="20" height="20" viewBox="0 0 20 20"><path d="M7 19H1V1h18v9M1 5h18M6 5v14M1 9.500h5M1 14h5M8.500 12H19v7H8.500z" /></svg></i>
      <i><svg width="20" height="20" viewBox="0 0 20 20"><path d="M5 19H1V1h18v5M1 5h18M6 5v8M1 9.500h5M1 14h5M9 8h4" /><circle cx="9.500" cy="12" r="2.300" /><path d="M6 19c0-5 7-5 7 0" /><circle cx="16" cy="9" r="2.300" /><path d="M13.500 14c1-2.500 5.500-2 5.500 2" /></svg></i>
      <i><svg width="20" height="20" viewBox="0 0 20 20"><path d="M5 19H1V1h18v5M1 6h18M6 1v12M12.500 1v6M1 9.500h5M1 14h5" /><circle cx="9.500" cy="12" r="2.300" /><path d="M6 19c0-5 7-5 7 0" /><circle cx="16" cy="9" r="2.300" /><path d="M13.500 14c1-2.500 5.500-2 5.500 2" /></svg></i>
      <i><svg width="20" height="20" viewBox="0 0 20 20"><path d="M2 .700h16.500v18.600H2zM0 5h4M0 14h4" /></svg></i>
    </div>
    <svg class="zoom" width="158" height="26" viewBox="1740 985 158 26"><path d="M1745 997.500h10M1892 997.500h9M1896.500 993v9" stroke="#aaa" stroke-width="1.200" /><path d="M1761 998.500h125M1823.500 995v7" stroke="#fff" stroke-width="1.300" /><path d="M1841 991h6v14h-6z" fill="#fff" /></svg>
  </footer>

  <footer class="taskbar">
    <div class="apps">
      {#each apps as a}
        <div class="cell" class:act={a.active} class:first={a.i === 'win'}>
          {@render appIcon(a.i)}
          {#if a.badge}<span class="badge">{a.badge}</span>{/if}
          {#if a.run}<span class="dot"></span>{/if}
          {#if a.active}<span class="dot wide"></span>{/if}
          {#if a.multi}<span class="dot multi"></span>{/if}
        </div>
      {/each}
    </div>
    <div class="tray">
      <svg class="up" width="14" height="8" viewBox="0 0 14 8"><path d="M1 7l6-6 6 6" fill="none" stroke="#fff" stroke-width="1.800" /></svg>
      <div class="lang">ESP<br />ES</div>
      <svg class="wifi" width="20" height="16" viewBox="0 0 20 16"><g fill="none" stroke="#fff" stroke-width="1.600"><path d="M.8 5.500a13 13 0 0 1 18.400 0M3.700 8.700a9 9 0 0 1 12.600 0M6.500 11.500a5 5 0 0 1 7 0" /></g><circle cx="10" cy="14" r="1.700" fill="#fff" /></svg>
      <svg class="spk" width="20" height="18" viewBox="0 0 20 18"><path d="M1 6h3l5-4.500v15L4 12H1z" fill="none" stroke="#fff" stroke-width="1.400" /><path d="M11.500 6.500c1.300 1.500 1.300 3.500 0 5" fill="none" stroke="#fff" stroke-width="1.400" /><path d="M14 4.500c2.500 2.700 2.500 6.300 0 9M16.500 2c4 4 4 10 0 14" fill="none" stroke="#666" stroke-width="1.400" /></svg>
      <svg class="bat" width="21" height="17" viewBox="0 0 21 17"><rect x="1.500" y="5" width="16" height="10.500" rx="2.500" fill="none" stroke="#fff" stroke-width="1.500" /><rect x="4" y="7.500" width="11" height="5.500" fill="#fff" /><path d="M18.500 8.500h1.500v3.500h-1.500z" fill="#fff" stroke="#fff" /><path d="M4.500 0L0 6.500h3L1.500 11l5-6h-3z" fill="#fff" stroke="#202020" stroke-width=".6" /></svg>
      <div class="clock">19:07<br />12/03/2025</div>
    </div>
  </footer>

  <div class="dialog">
    <div class="dtitle"><span>Información de la tarea</span>{@render cross()}</div>
    <div class="dtabs"><span>General</span><span>Predecesoras</span><span>Recursos</span><span>Avanzado</span><span class="on">Notas</span><span>Campos pers.</span></div>
    <div class="dbody">
      <div class="fields">
        <span><u>N</u>ombre:</span>
        <div class="inp">Creacion de la arquitectura MVC</div>
        <span class="dur"><u>D</u>uración:</span>
        <div class="inp">1 día</div>
        <div class="spin"><i><i class="su"></i></i><i><i class="sd"></i></i></div>
        <i class="chk"></i>
        <span><u>E</u>stimada</span>
      </div>
      <div class="nlabel">No<u>t</u>as:</div>
      <div class="toolbar">
        <i class="t0"><svg width="14" height="16" viewBox="0 0 14 16"><path d="M1 15.500L7 1l6 14.500M3.200 10.500h7.600" fill="none" stroke="#1a86d0" stroke-width="1.700" /></svg></i>
        <i class="t1"><svg width="20" height="17" viewBox="0 0 20 17"><path d="M1 1h18M1 6h13M1 11h18M1 16h13" /></svg></i>
        <i class="t2"><svg width="20" height="17" viewBox="0 0 20 17"><path d="M1 1h18M4 6h12M1 11h18M4 16h12" /></svg></i>
        <i class="t3 on"><svg width="20" height="17" viewBox="0 0 20 17"><path d="M1 1h18M6 6h13M1 11h18M6 16h13" /></svg></i>
        <i class="t4"><svg width="20" height="18" viewBox="0 0 20 18"><path d="M7 2h13M7 9h13M7 16h13" /><path d="M0 0h4v4H0zM0 7h4v4H0zM0 14h4v4H0z" fill="#1a86d0" stroke="none" /></svg></i>
        <i class="t5"><svg width="20" height="20" viewBox="0 0 20 20"><path d="M5 5V1h13v18H5v-3" /><path d="M2 6h9.500v9.500H2zM2 8.500h9.500" fill="#fff" stroke="#0f6cbd" stroke-width="1.800" /></svg></i>
      </div>
      <div class="notes">
        {#each notes as n, i}
          <div class="nrow {n.cls ?? ''}">
            <span class:caret={i === 0}>{n.a}</span><span>{n.b}</span>
            <span class="txt" class:under={n.t2}>{n.t}{#if n.link}&nbsp; <a href="#top">{n.link}</a>{/if}{#if n.t2}<br />{n.t2} <a href="#top">{n.link2}</a>{/if}</span>
          </div>
        {/each}
      </div>
      <div class="dbtns"><button>Ay<u>u</u>da</button><button class="ok">Aceptar</button><button>Cancelar</button></div>
    </div>
  </div>
</div>

<style>
  :global(body) { background: #262626; overflow: hidden; }
  .window { position: relative; width: 1898px; height: 1069px; overflow: hidden; display: flex; flex-direction: column; font-family: 'Open Sans', 'Noto Sans', sans-serif; color: #fff; font-size: 14.3px; background: #262626; white-space: nowrap; }
  svg { display: block; flex: none; }
  i { font-style: normal; }

  .titlebar { position: relative; height: 34px; background: #252423; color: #a6a6a6; display: grid; grid-template-columns: 801px 774px 117px 30px 1fr; align-items: start; font-size: 14.4px; }
  .clouds { position: absolute; left: 1298px; top: 0; }
  .quick { display: flex; align-items: center; padding: 4px 0 0 13px; color: #b0b0b0; }
  .quick svg:nth-child(2) { margin-left: 16px; }
  .quick svg:nth-child(3) { margin-left: 7px; }
  .quick svg:nth-child(4) { margin-left: 13px; }
  .quick svg:nth-child(5) { margin-left: 8px; }
  .quick svg:nth-child(6) { margin-left: 16px; }
  .doc { line-height: 21px; }
  .user { line-height: 26px; font-size: 14px; position: relative; }
  .avatar { position: relative; width: 30px; height: 30px; margin-top: -3px; border-radius: 50%; background: #ca5010; color: #fff; font-size: 12.5px; line-height: 30px; text-align: center; }
  .wbtns { position: relative; display: flex; gap: 43px; padding: 5px 0 0 37px; }

  .tabs { height: 42px; background: #32312f; display: grid; grid-template-columns: 88px 67px 88px 88px 95px 64px 76px 156px 109px 35px 944px 1fr; padding-left: 4px; font-size: 16px; }
  .tabs b { display: inline-block; font-weight: 400; line-height: 26px; padding-top: 6px; border-bottom: 4px solid transparent; letter-spacing: -.05px; }
  .tabs b.on { font-weight: 700; border-color: #fff; letter-spacing: -.75px; }
  .tabs .ask b { letter-spacing: .12px; }
  .search { padding-top: 10px; color: #ddd; }
  .docbtns { display: flex; gap: 44px; padding: 12px 0 0 1px; }

  .ribbon { height: 116px; background: #32312f; display: flex; position: relative; z-index: 1; }
  .group { position: relative; display: flex; flex-direction: column; box-sizing: border-box; height: 116px; background: linear-gradient(#484644, #484644) right 1px / 1px 109px no-repeat; }
  .g1 { width: 84px; } .g2 { width: 120px; } .g3 { width: 213px; } .g4 { width: 446px; } .g5 { width: 375px; } .g6 { width: 174px; } .g7 { width: 133px; } .g8 { width: 153px; }
  .body { height: 90px; display: flex; flex: none; }
  .label { line-height: 30px; height: 26px; flex: none; text-align: center; font-size: 12.5px; color: #f0f0f0; position: relative; letter-spacing: -.1px; }
  .g1 .label { padding-right: 16px; } .g3 .label { padding-right: 22px; } .g5 .label, .g4 .label, .g6 .label, .g8 .label { padding-right: 2px; }
  .launch { position: absolute; right: 4px; top: 10px; }
  .big { display: flex; flex-direction: column; align-items: center; text-align: center; line-height: 20px; }
  .big > svg { margin-top: 9px; }
  .big span { margin-top: 8px; }
  .big .chev { display: inline-block; vertical-align: 2px; }
  .g1 .big { width: 72px; }
  .g1 .big span { margin-left: -2px; letter-spacing: -.1px; }
  .big.paste { width: 60px; padding-left: 4px; }
  .g2 .body { padding-left: 2px; }
  .big.paste > svg { margin-top: 5px; margin-left: 6px; } .big.paste span { margin-top: 2px; }
  .smallcol div { height: 29px; display: flex; align-items: center; gap: 8px; }
  .g2 .smallcol div:first-child { padding-left: 3px; }
  .fonts { flex-direction: column; padding-left: 10px; }
  .combos { display: grid; grid-template-columns: 118px 73px; gap: 2px; margin-top: 10px; }
  .combo { height: 27px; border: 1px solid #7a7876; display: flex; align-items: center; justify-content: space-between; padding: 0 3px; font-size: 14px; background: #363533; }
  .fmt { display: grid; grid-template-columns: 26px 33px 27px 17px 49px 50px; align-items: center; margin-top: 10px; height: 28px; color: #c8c6c4; font-size: 16px; text-align: center; }
  .fmt i { font-style: italic; }
  .pair { display: flex; align-items: center; gap: 7px; margin-left: -2px; }
  .vsep { width: 1px; height: 27px; background: #484644; justify-self: center; }
  .sched { width: 174px; padding-left: 14px; box-sizing: border-box; flex: none; }
  .pcts { display: grid; grid-template-columns: repeat(5, 30px); padding-top: 15px; }
  .pcts div { width: 20px; display: flex; flex-direction: column; align-items: center; }
  .pcts small { font-size: 9.6px; line-height: 12px; color: #b0aeac; letter-spacing: -.4px; }
  .ind { display: grid; grid-template-columns: 18px 18px 1px 18px 1px 20px 20px; column-gap: 9.500px; margin-top: 12px; align-items: center; padding-left: 1px; height: 28px; }
  .lines { flex: none; }
  .lines > div { height: 30px; display: flex; align-items: center; }
  .lines > div > svg:first-child { width: 20px; margin-right: 4px; }
  .lines .chev { margin-left: 4px; }
  .lines .chev.far { margin-left: 12px; }
  .g4 .lines { padding-left: 2px; }
  .g5 .body { padding-left: 10px; }
  .big.sel { width: 94px; height: 90px; border: 1px solid #8a8886; background: #5e5c5a; margin-top: -1px; }
  .big.sel > svg { margin-top: 6px; } .big.sel span { margin-top: 6px; }
  .big.autop { width: 108px; }
  .autop > svg, .low > svg { margin-top: 13px; }
  .autop span, .low span { margin-top: 2px; }
  .tallsep { height: 75px; margin: 8px 9px 0 5px; flex: none; }
  .g6 .body { padding-left: 12px; }
  .ntask { width: 46px; margin-right: 8px; }
  .ntask > svg { margin-top: 3px; } .ntask span { margin-top: 13px; }
  .dis { color: #6e6c6a; }
  .g7 .body { padding-left: 11px; } .g7 .low { width: 84px; margin-right: 4px; }
  .g8 .body { padding-left: 7px; } .g8 .low { width: 91px; margin-right: 1px; }
  .g8 .smallcol { color: #c8c6c4; }
  .collapse { margin-left: auto; padding: 103px 0 0; width: 14px; }

  .timeline { height: 106px; display: flex; }
  .side { width: 19px; background: #262626; flex: none; position: relative; overflow: hidden; }
  .side span { writing-mode: vertical-rl; position: absolute; right: 7px; line-height: 20px; transform: rotate(180deg); }
  .escala { bottom: 2px; font-size: 16.5px; color: #999; }
  .diag { top: 257px; font-size: 17px; font-weight: 600; letter-spacing: -.1px; }
  .tl text { font-size: 12.6px; fill: #444; }
  .tl text.off { fill: #999; }
  .tl text.hoy { fill: #fff; font-weight: 700; font-size: 13px; }

  .main { height: 686px; display: flex; background: #262626; }
  .tablepane { width: 1094px; flex: none; margin-top: 4px; border-top: 1px solid #444; }
  .row { display: grid; grid-template-columns: 48px 51px 75px 347px 115px 115px 27px 43px 67px 59px 91px 56px; }
  .row > div { box-sizing: border-box; border-right: 1px solid #d0d0d0; border-bottom: 1px solid #d0d0d0; height: 28px; padding: 1px 2px 0; line-height: 22px; font-family: Lato, Carlito, sans-serif; font-size: 16px; letter-spacing: .1px; color: #1a1a1a; background: #fff; overflow: hidden; }
  .row.tall > div { height: 48px; }
  .rows { height: 572px; overflow: hidden; }
  .row > .num { background: #262626; color: #f0f0f0; font-family: 'Open Sans', sans-serif; font-size: 14px; text-align: center; border-color: #555; padding: 0; line-height: 24px; border-right-color: #3a3a3a; letter-spacing: 0; }
  .row > .r { text-align: right; padding-right: 2px; letter-spacing: -.15px; }
  .row > .ic { padding: 1px 0 0 2px; }
  .ar { display: block; padding-top: 5px; }
  .row > .ic.mode { padding: 0 0 0 3px; }
  .row > .name { white-space: normal; padding-left: 48px; position: relative; letter-spacing: .27px; }
  .row > .l1 { padding-left: 16px; } .row > .l2 { padding-left: 32px; }
  .row > .l2, .row > .l1 { padding-right: 4px; letter-spacing: .52px; }
  .row.sum > div, .row.root > div { font-weight: 700; }
  .row > .num, .row.root > .num, .row.sum > .num { font-weight: 400; }
  .sum > div:nth-child(n + 4) { background: #f1f1f1; color: #000; }
  .root > div:nth-child(n + 4) { background: #404040; color: #fff; }
  .root > .mode { border: 1px solid #404040; border-left: 2px solid #404040; }
  .row.root > .ic.mode { padding-left: 1px; }
  .tri { position: absolute; top: 10px; left: 20px; border-left: 6px solid transparent; border-bottom: 6px solid #444; }
  .l1 .tri { left: 4px; border-bottom-color: #777; }
  .row.sel > div { background: #c6c6c6; border-bottom: 2px solid #31752f; border-top: 2px solid #31752f; margin-top: -2px; height: 30px; box-shadow: inset 0 1px #f4f4f4, inset 0 -1px #f4f4f4; border-right-color: #aaa; }
  .row.sel > .num { background: #666; font-weight: 700; border-color: #666; box-shadow: none; }
  .head > div { height: 88px; background: #636363; color: #fff; font-family: 'Open Sans', sans-serif; font-weight: 700; font-size: 14px; line-height: 20px; border-color: #444; border-bottom: 2px solid #31752f; padding: 0 5px 1px; display: flex; align-items: flex-end; position: relative; letter-spacing: -.1px; }
  .head > .num { background: #262626; border-bottom-color: #444; }
  .head > .infocol { justify-content: center; padding-bottom: 7px; padding-right: 6px; }
  .flt { position: absolute; right: 7px; bottom: 5px; border: 4.500px solid transparent; border-bottom: 0; border-top: 5px solid #fff; }

  .hscroll { height: 18px; display: flex; background: #333; border: 2px solid #333; box-sizing: border-box; outline: 1px solid #fff; margin-top: 2px; }
  .hscroll.left { margin-left: 1px; width: 1092px; }
  .btn { width: 16px; background: #515151; display: flex; align-items: center; justify-content: center; flex: none; }
  .thumb { background: #515151; }
  .left .thumb { width: 814px; margin-left: 1px; } .left .track { flex: 1; }
  .right { width: 766px; margin-left: 1px; }
  .right .t1 { width: 115px; flex: none; } .right .thumb { width: 305px; } .right .track:not(.t1) { flex: 1; }
  .al { border: 5px solid transparent; border-left: 0; border-right: 6px solid #a0a0a0; }
  .arr { border: 5px solid transparent; border-right: 0; border-left: 6px solid #a0a0a0; }
  .au { border: 5px solid transparent; border-top: 0; border-bottom: 6px solid #a0a0a0; }
  .ad { border: 5px solid transparent; border-bottom: 0; border-top: 6px solid #a0a0a0; }
  .split { width: 5px; flex: none; background: #262626; border-left: 1px solid #fff; box-sizing: border-box; margin-top: 5px; }
  .ganttpane { width: 780px; flex: none; overflow: hidden; display: flex; margin-top: 4px; border-top: 1px solid #444; background: #fff; }
  .gcol { width: 769px; flex: none; }
  .gt { font-size: 12.8px; fill: #fff; }
  .vscroll { width: 18px; margin: 1px 0 21px 1px; background: #333; display: flex; flex-direction: column; flex: none; padding-left: 1px; box-sizing: border-box; }
  .vscroll .btn { width: 18px; height: 18px; margin-bottom: 2px; }
  .vscroll .thumb { height: 275px; } .vscroll .track { flex: 1; }

  .status { height: 27px; background: #32312f; border-bottom: 1px solid #454341; box-sizing: border-box; display: grid; grid-template-columns: 67px 1421px 252px 158px; align-items: center; font-size: 12.700px; letter-spacing: -.1px; }
  .listo { margin-left: -3px; padding-top: 2px; }
  .newt { display: flex; align-items: center; gap: 1px; padding-top: 2px; }
  .views { display: flex; height: 26px; }
  .views i { width: 50px; display: flex; align-items: center; justify-content: center; }
  .views i.on { background: #5e5c5a; }
  .views svg { fill: none; stroke: #e0e0e0; stroke-width: 1.5; }

  .taskbar { height: 58px; background: #202020; display: flex; justify-content: space-between; }
  .apps { display: flex; padding-left: 3px; }
  .cell { width: 55px; height: 58px; position: relative; display: flex; align-items: center; justify-content: center; }
  .cell > .app, .cell > span:first-child { margin-top: 2px; }
  .first { left: -2px; }
  .act::before { content: ''; position: absolute; left: 3px; top: 5px; width: 49px; height: 49px; border-radius: 4px; background: #2e2e2e; border: 1px solid #363636; box-sizing: border-box; }
  .act .app { position: relative; }
  .officeletter { font: 700 12px 'Open Sans', sans-serif; fill: #fff; }
  .qmark { font: 700 9px 'Open Sans', sans-serif; fill: #ddd; }
  .dot { position: absolute; bottom: 4px; left: 23.500px; width: 8px; height: 4px; border-radius: 2px; background: #9a9a9a; }
  .dot.wide { width: 20px; left: 17px; background: #ffb02e; }
  .dot.multi { width: 30px; left: 12.500px; height: 2.500px; bottom: 5px; background: linear-gradient(90deg, #ffb02e 7px, #9a9a9a 7px); }
  .badge { position: absolute; left: 27px; top: 8px; width: 22px; height: 22px; border-radius: 50%; background: #ffae35; color: #1a1a1a; font-size: 12.500px; line-height: 22px; text-align: center; }
  .adobe { width: 28px; height: 27px; border-radius: 5px; background: #001e36; color: #31a8ff; font: 700 14px/25px 'Open Sans', sans-serif; text-align: center; letter-spacing: -.4px; }
  .di { width: 30px; height: 30px; background: #383838; color: #ececec; font: 700 24px/30px 'Liberation Serif', serif; text-align: center; letter-spacing: -1px; }
  .stack { position: relative; }
  .xbadge { position: absolute; left: 16px; top: -8px; width: 20px; height: 20px; border-radius: 50%; background: #151515; color: #d88be0; font: 700 11px/20px 'Open Sans', sans-serif; text-align: center; }
  .tray { display: grid; flex: none; grid-template-columns: 22px 66px 28px 30px 30px 93px; align-items: center; justify-items: center; padding-right: 15px; line-height: 20px; font-size: 14.200px; }
  .tray .up { justify-self: start; }
  .lang { text-align: center; }
  .clock { text-align: right; justify-self: end; }

  .dialog { position: absolute; z-index: 5; left: 569px; top: 257px; width: 757px; height: 478px; box-sizing: border-box; border: 1px solid #9a9a9a; border-radius: 8px; background: #f0f0f0; color: #111; box-shadow: 0 32px 64px rgba(0, 0, 0, .38), 0 2px 20px rgba(0, 0, 0, .26); font-size: 12.700px; }
  .dtitle { height: 37px; box-sizing: border-box; background: #f3f3f3; border-radius: 8px 8px 0 0; display: flex; align-items: center; justify-content: space-between; padding: 0 14px 3px 8px; font-size: 13.900px; }
  .dtabs { display: flex; height: 23px; align-items: flex-end; padding-left: 2px; background: #f3f3f3; border-bottom: 1px solid #fff; }
  .dtabs span { box-sizing: border-box; height: 21px; line-height: 21px; border-top: 1px solid #fff; border-left: 1px solid #fff; border-right: 2px solid #777; text-align: center; background: #f0f0f0; letter-spacing: -.25px; margin-right: 1px; }
  .dtabs span:nth-child(1) { width: 57px; } .dtabs span:nth-child(2) { width: 90px; } .dtabs span:nth-child(3) { width: 64px; }
  .dtabs span:nth-child(4) { width: 67px; margin-right: 0; border-right: 0; } .dtabs span:nth-child(5) { width: 57px; height: 24px; margin-right: 0; margin-bottom: -1px; line-height: 21px; } .dtabs span:nth-child(6) { width: 91px; }
  .dbody { padding: 10px 5px 0 10px; }
  .fields { display: grid; grid-template-columns: 62px 434px 75px 59px 20px 31px 1fr; align-items: center; height: 28px; padding-left: 1px; letter-spacing: -.22px; }
  .inp { height: 26px; line-height: 25px; border: 1px solid #adadb2; background: #fff; padding-left: 5px; letter-spacing: -.05px; }
  .dur { padding-left: 10px; }
  .spin { display: grid; grid-template-rows: 13px 13px; margin-left: 1px; }
  .spin > i { display: flex; align-items: center; justify-content: center; background: #fff; border: 1px solid #ccc; box-sizing: border-box; border-radius: 2px; }
  .su { border: 3.500px solid transparent; border-top: 0; border-bottom: 5px solid #111; }
  .sd { border: 3.500px solid transparent; border-bottom: 0; border-top: 5px solid #111; }
  .chk { width: 14px; height: 14px; border: 1px solid #666; border-radius: 4px; background: #f6f6f6; justify-self: end; margin: -2px 2px 0 0; }
  .nlabel { line-height: 24px; padding-left: 1px; letter-spacing: -.2px; margin-bottom: 1px; }
  .toolbar { display: flex; box-sizing: border-box; height: 30px; margin: 0 2px 0 1px; border: 1px solid #828790; align-items: center; padding-left: 5px; }
  .toolbar i { width: 24px; height: 24px; box-sizing: border-box; border: 1px solid #d4d4d4; border-radius: 4px; background: #fdfdfd; display: flex; align-items: center; justify-content: center; }
  .toolbar svg { fill: none; stroke: #444; stroke-width: 1.500; }
  .toolbar .t1 { margin-left: 9px; } .toolbar .t2, .toolbar .t3 { margin-left: 3px; } .toolbar .t4 { margin-left: 8px; } .toolbar .t5 { margin-left: 8px; }
  .toolbar i.on { background: #cce4f7; border-color: #005499; }
  .notes { margin-top: 4px; height: 262px; border: 1px solid #adadb2; background: #fff; padding-top: 3px; font: 16px/22.500px Lato, Carlito, sans-serif; color: #111; box-sizing: border-box; }
  .nrow { display: grid; grid-template-columns: 58px 45px 1fr; height: 24px; padding-left: 34px; }
  .nrow.two { height: 45px; }
  .txt { letter-spacing: .33px; }
  .nrow a { color: #0563c1; text-decoration: underline; letter-spacing: .49px; }
  .caret { box-shadow: -1px 0 #000; height: 24px; }
  .under { border-bottom: 1px solid #bbb; margin-right: 1px; position: relative; height: 44px; }
  .under::after { content: ''; position: absolute; left: 106px; top: 45px; width: 1px; height: 22px; background: #bbb; }
  .dbtns { display: grid; grid-template-columns: 86px 439px 86px 86px; column-gap: 13px; justify-content: start; margin: 20px 0 0 2px; }
  .dbtns button { height: 28px; border: 1px solid #d0d0d0; border-radius: 4px; background: #fdfdfd; font: 12.700px 'Open Sans', sans-serif; color: #111; padding: 0; letter-spacing: -.2px; }
  .dbtns .ok { border-color: #0078d4; grid-column: 3; }
</style>
